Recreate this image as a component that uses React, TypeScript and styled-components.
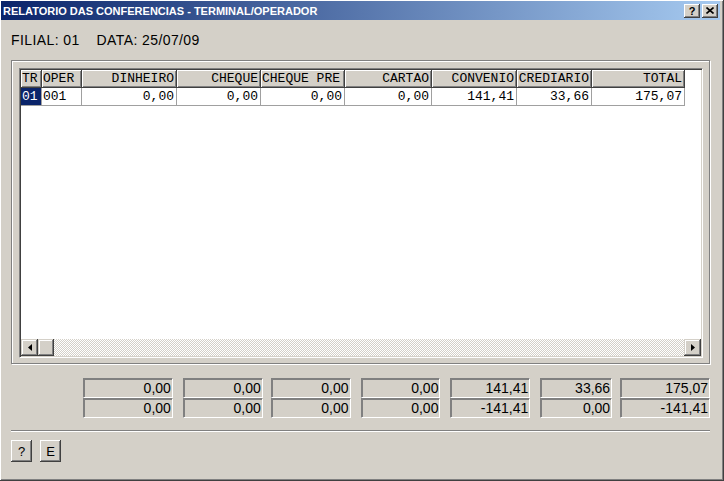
import styled, { createGlobalStyle } from "styled-components";

const GlobalStyle = createGlobalStyle`
    html, body {
        margin: 0;
        padding: 0;
        background: #d4d0c8;
    }
`;

const Window = styled.div`
    width: 724px;
    height: 481px;
    box-sizing: border-box;
    background: #d4d0c8;
    padding: 1px 3px 3px 1px;
    border-right: 1px solid #404040;
    border-bottom: 1px solid #404040;
    box-shadow: inset 1px 1px #ffffff, inset -1px -1px #808080;
    display: flex;
    flex-direction: column;
    font-family: "Liberation Sans", Arial, sans-serif;
`;

const TitleBar = styled.div`
    height: 19px;
    flex: none;
    display: flex;
    align-items: center;
    padding-left: 2px;
    background: linear-gradient(to right, #0a246a, #a6caf0);
`;

const Title = styled.span`
    flex: 1;
    color: #ffffff;
    font-weight: bold;
    font-size: 11px;
    white-space: nowrap;
`;

const CaptionButton = styled.div`
    width: 16px;
    height: 14px;
    box-sizing: border-box;
    margin-left: 2px;
    background: #d4d0c8;
    box-shadow: inset -1px -1px #404040, inset 1px 1px #ffffff,
        inset -2px -2px #808080, inset 2px 2px #d4d0c8;
    display: flex;
    align-items: center;
    justify-content: center;
    font-weight: bold;
    font-size: 11px;
    color: #000;

    &:last-child {
        margin-right: 2px;
    }
`;

const Body = styled.div`
    flex: 1;
    display: flex;
    flex-direction: column;
    padding: 0 10px 0 10px;
`;

const InfoLine = styled.div`
    margin-top: 12px;
    height: 16px;
    line-height: 16px;
    font-size: 14px;
    letter-spacing: 0.4px;
    color: #000;
    display: flex;
    gap: 17px;
`;

const GroupBox = styled.div`
    margin-top: 12px;
    height: 304px;
    box-sizing: border-box;
    border: 1px solid #808080;
    box-shadow: inset 1px 1px #ffffff, 1px 1px #ffffff;
    padding: 7px 6px 5px 7px;
`;

const Grid = styled.div`
    height: 290px;
    box-sizing: border-box;
    border: 1px solid;
    border-color: #808080 #ffffff #ffffff #808080;
    box-shadow: inset 1px 1px #404040, inset -1px -1px #d4d0c8;
    padding: 1px;
    display: flex;
    flex-direction: column;
`;

const Sheet = styled.div`
    flex: 1;
    background: #ffffff;
    overflow: hidden;
    font-family: "Liberation Mono", "Courier New", monospace;
    font-size: 13px;
`;

const Row = styled.div`
    display: flex;
    height: 18px;
`;

const HeadCell = styled.div<{ $w: number; $left?: boolean }>`
    width: ${(p) => p.$w}px;
    flex: none;
    box-sizing: border-box;
    height: 18px;
    line-height: 17px;
    padding: 0 2px 0 1px;
    text-align: ${(p) => (p.$left ? "left" : "right")};
    white-space: nowrap;
    overflow: hidden;
    background: #d4d0c8;
    color: #000;
    border-right: 1px solid #404040;
    border-bottom: 1px solid #404040;
    box-shadow: inset 1px 1px #ffffff, inset -1px -1px #808080;
`;

const Cell = styled.div<{ $w: number; $left?: boolean; $selected?: boolean }>`
    width: ${(p) => p.$w}px;
    flex: none;
    box-sizing: border-box;
    height: 18px;
    line-height: 17px;
    padding: 0 2px 0 1px;
    text-align: ${(p) => (p.$left ? "left" : "right")};
    white-space: nowrap;
    overflow: hidden;
    background: ${(p) => (p.$selected ? "#0a246a" : "#ffffff")};
    color: ${(p) => (p.$selected ? "#ffffff" : "#000")};
    border-right: 1px solid #a0a0a0;
    border-bottom: 1px solid #a0a0a0;
`;

const ScrollBar = styled.div`
    height: 17px;
    flex: none;
    display: flex;
`;

const ScrollButton = styled.div<{ $w?: number }>`
    width: ${(p) => p.$w ?? 17}px;
    height: 17px;
    flex: none;
    box-sizing: border-box;
    background: #d4d0c8;
    box-shadow: inset -1px -1px #404040, inset 1px 1px #d4d0c8,
        inset -2px -2px #808080, inset 2px 2px #ffffff;
    display: flex;
    align-items: center;
    justify-content: center;
`;

const Track = styled.div`
    flex: 1;
    background: repeating-conic-gradient(#ffffff 0 25%, #d4d0c8 0 50%) 0 0 / 2px
        2px;
`;

const TotalsRow = styled.div<{ $first?: boolean }>`
    display: flex;
    margin-top: ${(p) => (p.$first ? 14 : 0)}px;
`;

const TotalBox = styled.div<{ $w: number; $ml: number }>`
    width: ${(p) => p.$w}px;
    margin-left: ${(p) => p.$ml}px;
    height: 20px;
    box-sizing: border-box;
    border-top: 1px solid #808080;
    border-left: 1px solid #808080;
    border-bottom: 1px solid #ffffff;
    border-right: 1px solid #ffffff;
    box-shadow: inset 1px 1px #808080;
    padding-right: 1px;
    text-align: right;
    font-size: 14px;
    line-height: 18px;
    color: #000;
`;

const Separator = styled.div`
    margin-top: 12px;
    height: 0;
    border-top: 1px solid #808080;
    border-bottom: 1px solid #ffffff;
`;

const ButtonBar = styled.div`
    margin-top: 8px;
    display: flex;
    gap: 8px;
`;

const Button = styled.div`
    width: 21px;
    height: 22px;
    box-sizing: border-box;
    background: #d4d0c8;
    box-shadow: inset -1px -1px #404040, inset 1px 1px #ffffff,
        inset -2px -2px #808080, inset 2px 2px #d4d0c8;
    display: flex;
    align-items: center;
    justify-content: center;
    font-size: 13px;
    color: #000;
`;

// headLeft: header text alignment, left: data alignment
const columns = [
    { title: "TR", w: 21, headLeft: true, left: true },
    { title: "OPER", w: 40, headLeft: true, left: true },
    { title: "DINHEIRO", w: 95 },
    { title: "CHEQUE", w: 84 },
    { title: "CHEQUE PRE", w: 84, headLeft: true },
    { title: "CARTAO", w: 87 },
    { title: "CONVENIO", w: 85 },
    { title: "CREDIARIO", w: 75 },
    { title: "TOTAL", w: 93 },
];

const row = ["01", "001", "0,00", "0,00", "0,00", "0,00", "141,41", "33,66", "175,07"];

const totals = [
    { w: 90, ml: 72, a: "0,00", b: "0,00" },
    { w: 80, ml: 10, a: "0,00", b: "0,00" },
    { w: 80, ml: 8, a: "0,00", b: "0,00" },
    { w: 80, ml: 10, a: "0,00", b: "0,00" },
    { w: 80, ml: 10, a: "141,41", b: "-141,41" },
    { w: 72, ml: 10, a: "33,66", b: "0,00" },
    { w: 90, ml: 8, a: "175,07", b: "-141,41" },
];

function App() {
    return (
        <>
            <GlobalStyle />
            <Window>
                <TitleBar>
                    <Title>RELATORIO DAS CONFERENCIAS - TERMINAL/OPERADOR</Title>
                    <CaptionButton>?</CaptionButton>
                    <CaptionButton>
                        <svg width="8" height="7" viewBox="0 0 8 7">
                            <path d="M0.5 0.5 L7.5 6.5 M7.5 0.5 L0.5 6.5" stroke="#000" strokeWidth="1.6" />
                        </svg>
                    </CaptionButton>
                </TitleBar>
                <Body>
                    <InfoLine>
                        <span>FILIAL: 01</span>
                        <span>DATA: 25/07/09</span>
                    </InfoLine>
                    <GroupBox>
                        <Grid>
                            <Sheet>
                                <Row>
                                    {columns.map((c) => (
                                        <HeadCell key={c.title} $w={c.w} $left={c.headLeft}>
                                            {c.title}
                                        </HeadCell>
                                    ))}
                                </Row>
                                <Row>
                                    {row.map((v, i) => (
                                        <Cell
                                            key={i}
                                            $w={columns[i].w}
                                            $left={columns[i].left}
                                            $selected={i === 0}
                                        >
                                            {v}
                                        </Cell>
                                    ))}
                                </Row>
                            </Sheet>
                            <ScrollBar>
                                <ScrollButton>
                                    <svg width="4" height="7" viewBox="0 0 4 7">
                                        <path d="M4 0 L0 3.5 L4 7 Z" fill="#000" />
                                    </svg>
                                </ScrollButton>
                                <ScrollButton $w={16} />
                                <Track />
                                <ScrollButton>
                                    <svg width="4" height="7" viewBox="0 0 4 7">
                                        <path d="M0 0 L4 3.5 L0 7 Z" fill="#000" />
                                    </svg>
                                </ScrollButton>
                            </ScrollBar>
                        </Grid>
                    </GroupBox>
                    <TotalsRow $first>
                        {totals.map((t, i) => (
                            <TotalBox key={i} $w={t.w} $ml={t.ml}>
                                {t.a}
                            </TotalBox>
                        ))}
                    </TotalsRow>
                    <TotalsRow>
                        {totals.map((t, i) => (
                            <TotalBox key={i} $w={t.w} $ml={t.ml}>
                                {t.b}
                            </TotalBox>
                        ))}
                    </TotalsRow>
                    <Separator />
                    <ButtonBar>
                        <Button>?</Button>
                        <Button>E</Button>
                    </ButtonBar>
                </Body>
            </Window>
        </>
    );
}

export default App;
